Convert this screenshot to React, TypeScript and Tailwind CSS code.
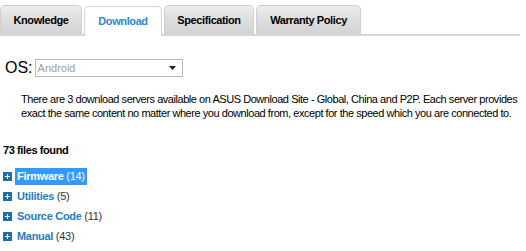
export default function App() {
  const tabs = ['Knowledge', 'Download', 'Specification', 'Warranty Policy']
  const widths = ['w-[82px]', 'w-[78px]', 'w-[90px]', 'w-[105px]']
  const cats = [
    { name: 'Firmware', count: 14, sel: true },
    { name: 'Utilities', count: 5 },
    { name: 'Source Code', count: 11 },
    { name: 'Manual', count: 43 },
  ]
  return (
    <div className="w-[526px] h-[251px] bg-white overflow-hidden font-['Liberation_Sans',Arial,sans-serif] text-black">
      <div className="flex items-end gap-[2px] pt-[5px] w-[520px] border-b-2 border-[#d6d6d6]">
        {tabs.map((t, i) =>
          t === 'Download' ? (
            <div
              key={t}
              className={`${widths[i]} h-[30px] -mb-[2px] rounded-t-[5px] border border-b-0 border-[#d4d4d4] bg-white flex items-center justify-center text-[11px] tracking-[-0.4px] font-bold text-[#2a8ad0]`}
            >
              {t}
            </div>
          ) : (
            <div
              key={t}
              className={`${widths[i]} h-[29px] rounded-t-[5px] border border-b-0 border-[#d0d0d0] bg-gradient-to-b from-[#ececec] via-[#dedede] to-[#d2d2d2] flex items-center justify-center text-[11px] tracking-[-0.4px] font-bold`}
            >
              {t}
            </div>
          )
        )}
      </div>
      <div className="flex items-center mt-[23px] ml-[5px]">
        <span className="text-[16px] leading-none">OS:</span>
        <div className="ml-[2px] w-[148px] h-[18px] border border-[#b8b8b8] flex items-center justify-between pl-[2px] pr-[6px]">
          <span className="text-[11px] text-[#a0a0a0]">Android</span>
          <svg width="7" height="4" viewBox="0 0 7 4"><path d="M0 0h7L3.5 4z" fill="#222" /></svg>
        </div>
      </div>
      <p className="ml-[21px] mt-[15px] text-[11px] tracking-[-0.45px] leading-[14px] whitespace-nowrap">
        There are 3 download servers available on ASUS Download Site - Global, China and P2P. Each server provides
        <br />
        exact the same content no matter where you download from, except for the speed which you are connected to.
      </p>
      <div className="ml-[3px] mt-[22px] text-[11px] tracking-[-0.4px] font-bold">73 files found</div>
      <div className="mt-[11px] flex flex-col gap-[6px]">
        {cats.map(c => (
          <div key={c.name} className="flex items-center h-[14px] ml-[3px]">
            <span className="w-[9px] h-[9px] bg-[#1c6fae] flex items-center justify-center mr-[3px]">
              <svg width="7" height="7" viewBox="0 0 7 7"><path d="M3 1h1v2h2v1H4v2H3V4H1V3h2z" fill="#fff" /></svg>
            </span>
            <span className={`text-[11px] tracking-[-0.3px] font-bold px-[2px] ${c.sel ? 'bg-[#3399ff] text-white' : 'text-[#1e7ec4]'}`}>
              {c.name} <span className={c.sel ? 'font-normal' : 'font-normal text-[#333]'}>({c.count})</span>
            </span>
          </div>
        ))}
      </div>
    </div>
  )
}
